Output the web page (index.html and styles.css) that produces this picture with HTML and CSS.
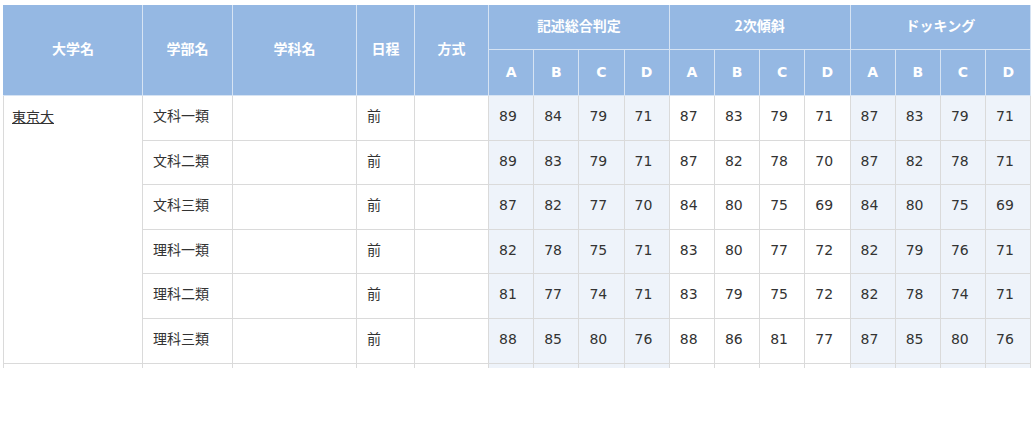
FILE: index.html
```html
<!DOCTYPE html>
<html lang="ja">
<head>
<meta charset="utf-8">
<title>判定表</title>
<link rel="stylesheet" href="styles.css">
</head>
<body>
<div class="wrap">
<table class="grid">
  <colgroup>
    <col class="c-univ"><col class="c-fac"><col class="c-dept"><col class="c-date"><col class="c-meth">
    <col class="c-n"><col class="c-n"><col class="c-n"><col class="c-n">
    <col class="c-n"><col class="c-n"><col class="c-n"><col class="c-n">
    <col class="c-n"><col class="c-n"><col class="c-n"><col class="c-n">
  </colgroup>
  <thead>
    <tr class="h1">
      <th rowspan="2" class="rs">大学名</th>
      <th rowspan="2" class="rs">学部名</th>
      <th rowspan="2" class="rs">学科名</th>
      <th rowspan="2" class="rs">日程</th>
      <th rowspan="2" class="rs">方式</th>
      <th colspan="4">記述総合判定</th>
      <th colspan="4">2次傾斜</th>
      <th colspan="4">ドッキング</th>
    </tr>
    <tr class="h2">
      <th>A</th><th>B</th><th>C</th><th>D</th>
      <th>A</th><th>B</th><th>C</th><th>D</th>
      <th>A</th><th>B</th><th>C</th><th>D</th>
    </tr>
  </thead>
  <tbody>
    <tr>
      <td rowspan="6" class="univ"><a href="#">東京大</a></td>
      <td>文科一類</td><td></td><td>前</td><td></td>
      <td class="s">89</td><td class="s">84</td><td class="s">79</td><td class="s">71</td>
      <td>87</td><td>83</td><td>79</td><td>71</td>
      <td class="s">87</td><td class="s">83</td><td class="s">79</td><td class="s">71</td>
    </tr>
    <tr>
      <td>文科二類</td><td></td><td>前</td><td></td>
      <td class="s">89</td><td class="s">83</td><td class="s">79</td><td class="s">71</td>
      <td>87</td><td>82</td><td>78</td><td>70</td>
      <td class="s">87</td><td class="s">82</td><td class="s">78</td><td class="s">71</td>
    </tr>
    <tr>
      <td>文科三類</td><td></td><td>前</td><td></td>
      <td class="s">87</td><td class="s">82</td><td class="s">77</td><td class="s">70</td>
      <td>84</td><td>80</td><td>75</td><td>69</td>
      <td class="s">84</td><td class="s">80</td><td class="s">75</td><td class="s">69</td>
    </tr>
    <tr>
      <td>理科一類</td><td></td><td>前</td><td></td>
      <td class="s">82</td><td class="s">78</td><td class="s">75</td><td class="s">71</td>
      <td>83</td><td>80</td><td>77</td><td>72</td>
      <td class="s">82</td><td class="s">79</td><td class="s">76</td><td class="s">71</td>
    </tr>
    <tr>
      <td>理科二類</td><td></td><td>前</td><td></td>
      <td class="s">81</td><td class="s">77</td><td class="s">74</td><td class="s">71</td>
      <td>83</td><td>79</td><td>75</td><td>72</td>
      <td class="s">82</td><td class="s">78</td><td class="s">74</td><td class="s">71</td>
    </tr>
    <tr>
      <td>理科三類</td><td></td><td>前</td><td></td>
      <td class="s">88</td><td class="s">85</td><td class="s">80</td><td class="s">76</td>
      <td>88</td><td>86</td><td>81</td><td>77</td>
      <td class="s">87</td><td class="s">85</td><td class="s">80</td><td class="s">76</td>
    </tr>
    <tr>
      <td class="univ">&nbsp;</td>
      <td>&nbsp;</td><td></td><td></td><td></td>
      <td class="s"></td><td class="s"></td><td class="s"></td><td class="s"></td>
      <td></td><td></td><td></td><td></td>
      <td class="s"></td><td class="s"></td><td class="s"></td><td class="s"></td>
    </tr>
  </tbody>
</table>
</div>
</body>
</html>
```
FILE: styles.css
```css
html, body {
  margin: 0;
  padding: 0;
  background: #fff;
}
body {
  font-family: "DejaVu Sans", "Noto Sans CJK JP", sans-serif;
  font-size: 14px;
  color: #333;
}
.wrap {
  margin: 5px 0 0 3px;
  width: 1028px;
  height: 363px;
  overflow: hidden;
}
.grid {
  border-collapse: collapse;
  table-layout: fixed;
  width: 1028px;
}
.c-univ { width: 139px; }
.c-fac { width: 90px; }
.c-dept { width: 124px; }
.c-date { width: 58px; }
.c-meth { width: 74px; }
.c-n { width: 45.2px; }

.grid th {
  background: #95b8e3;
  color: #fff;
  font-weight: bold;
  text-align: center;
  vertical-align: middle;
  border: 1px solid #d6e3f3;
  padding: 0 0 5px;
  line-height: 20px;
  font-family: "Noto Sans CJK JP", "DejaVu Sans", sans-serif;
}
.grid .h2 th {
  font-family: "DejaVu Sans", "Noto Sans CJK JP", sans-serif;
  padding: 0 0 2px;
}
.grid thead tr:first-child th {
  border-top-color: #95b8e3;
}
.grid thead th:first-child {
  border-left-color: #95b8e3;
}
.grid .h1 th { height: 38px; }
.grid .h2 th { height: 43px; }

.grid td {
  border: 1px solid #dadada;
  padding: 10px 10px 13.6px;
  line-height: 20px;
  text-align: left;
  vertical-align: middle;
  white-space: nowrap;
  background: #fff;
}
.grid td.s {
  background: #eef3fa;
}
.grid td.univ {
  vertical-align: top;
  padding-left: 8px;
}
.grid td.univ a {
  color: #333;
  text-decoration: underline;
  font-family: "Noto Sans CJK JP", sans-serif;
}
```
